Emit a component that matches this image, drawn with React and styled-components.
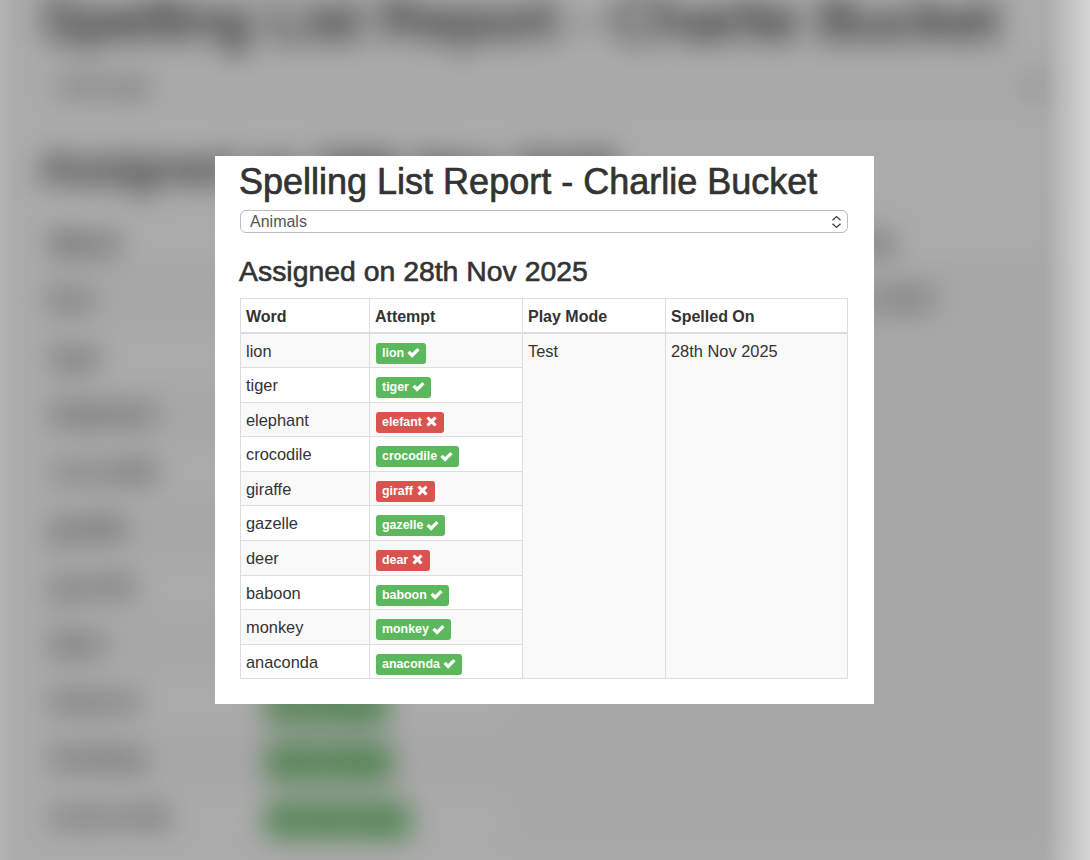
import React from 'react'
import styled, { createGlobalStyle } from 'styled-components'

const GlobalStyle = createGlobalStyle`
  html, body {
    margin: 0;
    padding: 0;
    background: #fff;
  }
  body {
    font-family: "Liberation Sans", Arial, sans-serif;
    color: #333;
  }
`

const Page = styled.div`
  position: relative;
  width: 1090px;
  height: 860px;
  overflow: hidden;
`

const Dim = styled.div`
  position: absolute;
  inset: 0;
  background:
    linear-gradient(to right, rgba(255, 255, 255, 0.1), rgba(255, 255, 255, 0) 16px),
    linear-gradient(to left, rgba(255, 255, 255, 0.5), rgba(255, 255, 255, 0) 45px),
    rgba(0, 0, 0, 0.33);
`

const Modal = styled.div`
  position: absolute;
  left: 215px;
  top: 156px;
  width: 659px;
  height: 548px;
  background: #fff;
`

const Content = styled.div`
  padding: 0 26px 25px 25px;
`

const Title = styled.h1`
  margin: 0 0 0 -1px;
  padding-top: 6px;
  font-size: 36px;
  line-height: 40px;
  font-weight: 400;
  -webkit-text-stroke: 0.7px #333;
  white-space: nowrap;
`

const SelectWrap = styled.div`
  position: relative;
  margin-top: 8px;
  height: 23px;
`

const Select = styled.select`
  appearance: none;
  display: block;
  width: 100%;
  height: 23px;
  box-sizing: border-box;
  padding: 0 0 0 9px;
  border: 1px solid #bdbdbd;
  border-radius: 6px;
  background: #fff;
  color: #555;
  font-family: inherit;
  font-size: 16px;
`

const SelectArrows = styled.svg`
  position: absolute;
  right: 6px;
  top: 5px;
  width: 11px;
  height: 14px;
`

const SubTitle = styled.h3`
  margin: 22px 0 10px -1px;
  font-size: 28.4px;
  line-height: 33px;
  font-weight: 400;
  -webkit-text-stroke: 0.6px #333;
  white-space: nowrap;
`

const Table = styled.table`
  width: 607px;
  table-layout: fixed;
  border-collapse: collapse;
  font-size: 16.4px;
`

const HeadCell = styled.th`
  height: 34.4px;
  padding: 3px 5px 0;
  box-sizing: border-box;
  border: 1px solid #ddd;
  border-bottom: 2px solid #ddd;
  text-align: left;
  font-size: 16px;
  font-weight: 700;
`

const Row = styled.tr`
  background: ${(p) => (p.$striped ? '#f9f9f9' : '#fff')};
`

const Cell = styled.td`
  height: 34.6px;
  padding: 5px 5px 0;
  box-sizing: border-box;
  border: 1px solid #ddd;
  vertical-align: top;
  line-height: 24px;
`

const SpanCell = styled(Cell)`
  background: #f9f9f9;
`

const AttemptCell = styled(Cell)`
  padding: 9px 6px 0;
  line-height: 0;
`

const Badge = styled.span`
  display: inline-flex;
  align-items: center;
  gap: 3px;
  height: 21px;
  padding: 0 6px;
  border-radius: 3px;
  background: ${(p) => (p.$ok ? '#5cb85c' : '#d9534f')};
  color: #fff;
  font-size: 12.4px;
  line-height: 21px;
  font-weight: 700;
  white-space: nowrap;
`

const BadgeIcon = styled.svg`
  width: 13px;
  height: 13px;
  margin-top: -1px;
  fill: #fff;
`

// whatever the dialog fully covers is not drawn in the blurred copy
const Covered = styled.span``

const BlurredPage = styled.div`
  filter: blur(14px);
  margin: -40px -40px 0;
  padding: 17px 40px 60px;
  background: #fff;
`

const ZoomedReport = styled.div`
  zoom: 1.66;
  width: 659px;

  ${Covered} {
    visibility: hidden;
  }
`

const words = [
  { word: 'lion', attempt: 'lion', ok: true },
  { word: 'tiger', attempt: 'tiger', ok: true },
  { word: 'elephant', attempt: 'elefant', ok: false },
  { word: 'crocodile', attempt: 'crocodile', ok: true },
  { word: 'giraffe', attempt: 'giraff', ok: false },
  { word: 'gazelle', attempt: 'gazelle', ok: true },
  { word: 'deer', attempt: 'dear', ok: false },
  { word: 'baboon', attempt: 'baboon', ok: true },
  { word: 'monkey', attempt: 'monkey', ok: true },
  { word: 'anaconda', attempt: 'anaconda', ok: true },
]

function CheckIcon() {
  return (
    <BadgeIcon viewBox="0 0 13 13">
      <polygon points="0.4,7 2.7,4.7 5.1,7.1 10.3,1.9 12.6,4.2 5.1,11.7" />
    </BadgeIcon>
  )
}

function CrossIcon() {
  return (
    <BadgeIcon viewBox="0 0 13 13">
      <polygon points="1.4,3.6 3.6,1.4 6.5,4.3 9.4,1.4 11.6,3.6 8.7,6.5 11.6,9.4 9.4,11.6 6.5,8.7 3.6,11.6 1.4,9.4 4.3,6.5" />
    </BadgeIcon>
  )
}

function Report() {
  return (
    <Content>
      <Title>Spelling List Report - Charlie Bucket</Title>
      <SelectWrap>
        <Select defaultValue="Animals">
          <option>Animals</option>
        </Select>
        <SelectArrows viewBox="0 0 11 14" fill="none" stroke="#444" strokeWidth="1.4">
          <path d="M1.5 5.2 L5.5 1.6 L9.5 5.2" />
          <path d="M1.5 8.8 L5.5 12.4 L9.5 8.8" />
        </SelectArrows>
      </SelectWrap>
      <SubTitle>Assigned on 28th Nov 2025</SubTitle>
      <Table>
        <colgroup>
          <col width="129" />
          <col width="153" />
          <col width="143" />
          <col width="182" />
        </colgroup>
        <thead>
          <tr>
            <HeadCell>Word</HeadCell>
            <HeadCell>
              <Covered>Attempt</Covered>
            </HeadCell>
            <HeadCell>
              <Covered>Play Mode</Covered>
            </HeadCell>
            <HeadCell>Spelled On</HeadCell>
          </tr>
        </thead>
        <tbody>
          {words.map((w, i) => {
            const badge = (
              <Badge $ok={w.ok}>
                {w.attempt}
                {w.ok ? <CheckIcon /> : <CrossIcon />}
              </Badge>
            )
            return (
              <Row key={w.word} $striped={i % 2 === 0}>
                <Cell>{w.word}</Cell>
                <AttemptCell>{i < 7 ? <Covered>{badge}</Covered> : badge}</AttemptCell>
                {i === 0 && (
                  <>
                    <SpanCell rowSpan={words.length}>
                      <Covered>Test</Covered>
                    </SpanCell>
                    <SpanCell rowSpan={words.length}>28th Nov 2025</SpanCell>
                  </>
                )}
              </Row>
            )
          })}
        </tbody>
      </Table>
    </Content>
  )
}

export default function App() {
  return (
    <Page>
      <GlobalStyle />
      <BlurredPage aria-hidden="true">
        <ZoomedReport>
          <Report />
        </ZoomedReport>
      </BlurredPage>
      <Dim />
      <Modal>
        <Report />
      </Modal>
    </Page>
  )
}
